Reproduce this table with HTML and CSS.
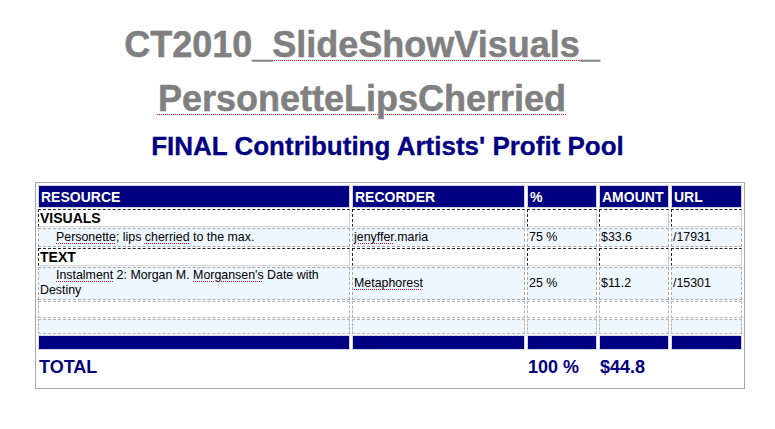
FILE: index.html
```html
<!DOCTYPE html>
<html lang="en">
<head>
<meta charset="utf-8">
<title>CT2010_SlideShowVisuals_PersonetteLipsCherried</title>
<link rel="stylesheet" href="styles.css">
</head>
<body>
<h1 class="title">CT2010_<span class="spell">SlideShowVisuals</span>_<wbr><span class="spell">PersonetteLipsCherried</span></h1>
<h2 class="subtitle">FINAL Contributing Artists' Profit Pool</h2>
<div class="sheet">
  <table class="pool">
    <colgroup>
      <col class="c-res"><col class="c-rec"><col class="c-pct"><col class="c-amt"><col class="c-url">
    </colgroup>
    <thead>
      <tr class="r-head">
        <th>RESOURCE</th><th>RECORDER</th><th>%</th><th>AMOUNT</th><th>URL</th>
      </tr>
    </thead>
    <tbody>
      <tr class="r-sec">
        <td class="sec">VISUALS</td><td></td><td></td><td></td><td></td>
      </tr>
      <tr class="r-item">
        <td class="indent"><span class="spell">Personette</span>; lips <span class="spell">cherried</span> to the max.</td>
        <td><span class="spell">jenyffer</span>.maria</td><td>75 %</td><td>$33.6</td><td>/17931</td>
      </tr>
      <tr class="r-sec">
        <td class="sec">TEXT</td><td></td><td></td><td></td><td></td>
      </tr>
      <tr class="r-item r-tall">
        <td class="indent"><span class="spell">Instalment</span> 2: Morgan M. <span class="spell">Morgansen's</span> Date with Destiny</td>
        <td><span class="spell">Metaphorest</span></td><td>25 %</td><td>$11.2</td><td>/15301</td>
      </tr>
      <tr class="r-empty r-e1">
        <td></td><td></td><td></td><td></td><td></td>
      </tr>
      <tr class="r-empty r-e2">
        <td></td><td></td><td></td><td></td><td></td>
      </tr>
      <tr class="r-bar">
        <td></td><td></td><td></td><td></td><td></td>
      </tr>
    </tbody>
    <tfoot>
      <tr class="r-total">
        <td>TOTAL</td><td></td><td>100 %</td><td>$44.8</td><td></td>
      </tr>
    </tfoot>
  </table>
</div>
</body>
</html>
```
FILE: styles.css
```css
html, body {
  margin: 0;
  background: #ffffff;
}

body {
  font-family: "Liberation Sans", Arial, Helvetica, sans-serif;
  color: #000;
}

.spell {
  text-decoration: underline dotted #e01010;
  text-decoration-thickness: 1px;
  text-underline-offset: 2px;
}

.title {
  margin: 18px 51px 0 0;
  font-size: 36px;
  line-height: 54px;
  font-weight: bold;
  color: #808080;
  -webkit-text-stroke: 0.5px #808080;
  text-align: center;
}

.title .spell {
  text-underline-offset: 3px;
}

.subtitle {
  margin: 5px 0 0;
  font-size: 26px;
  line-height: 30px;
  font-weight: bold;
  color: #000080;
  -webkit-text-stroke: 0.3px #000080;
  text-align: center;
}

.sheet {
  margin: 21px 30px 0 35px;
  border: 1px solid #a8a8a8;
  padding-top: 1px;
}

.pool {
  width: 100%;
  table-layout: fixed;
  border-collapse: separate;
  border-spacing: 2px 1px;
  font-size: 12.4px;
  line-height: 15px;
}

.c-res { width: 312px; }
.c-rec { width: 173px; }
.c-pct { width: 70px; }
.c-amt { width: 70px; }
.c-url { width: 71px; }

.pool th,
.pool td {
  box-sizing: border-box;
  padding: 0 1px;
  text-align: left;
  vertical-align: middle;
}

.r-head th {
  height: 23px;
  background: #000080;
  color: #ffffff;
  font-size: 14px;
  line-height: 16px;
  font-weight: bold;
  border: 1px solid #d4d4e6;
  padding: 0 2px;
}

.r-sec td {
  height: 18px;
  background: #ffffff;
  border-top: 1px dashed #222;
  border-left: 1px dashed #222;
  border-right: 1px solid #d2d2d2;
  border-bottom: 1px solid #d2d2d2;
}

.r-sec td.sec {
  font-size: 14px;
  line-height: 16px;
  font-weight: bold;
}

.r-item td {
  height: 19px;
  background: #eef6fe;
  border: 1px dashed #a8a8a8;
}

.r-tall td {
  height: 31px;
  padding-bottom: 1px;
}

.indent {
  text-indent: 16px;
}

.r-empty td {
  border: 1px dashed #b4b4b4;
  line-height: 10px;
}

.r-e1 td {
  height: 17px;
  background: #ffffff;
}

.r-e2 td {
  height: 15px;
  background: #eef6fe;
}

.r-bar td {
  height: 15px;
  line-height: 10px;
  background: #000080;
  border: 1px solid #d4d4e6;
}

.r-total td {
  padding: 6px 1px 9px;
  font-size: 18px;
  line-height: 21px;
  font-weight: bold;
  color: #000080;
}
```
